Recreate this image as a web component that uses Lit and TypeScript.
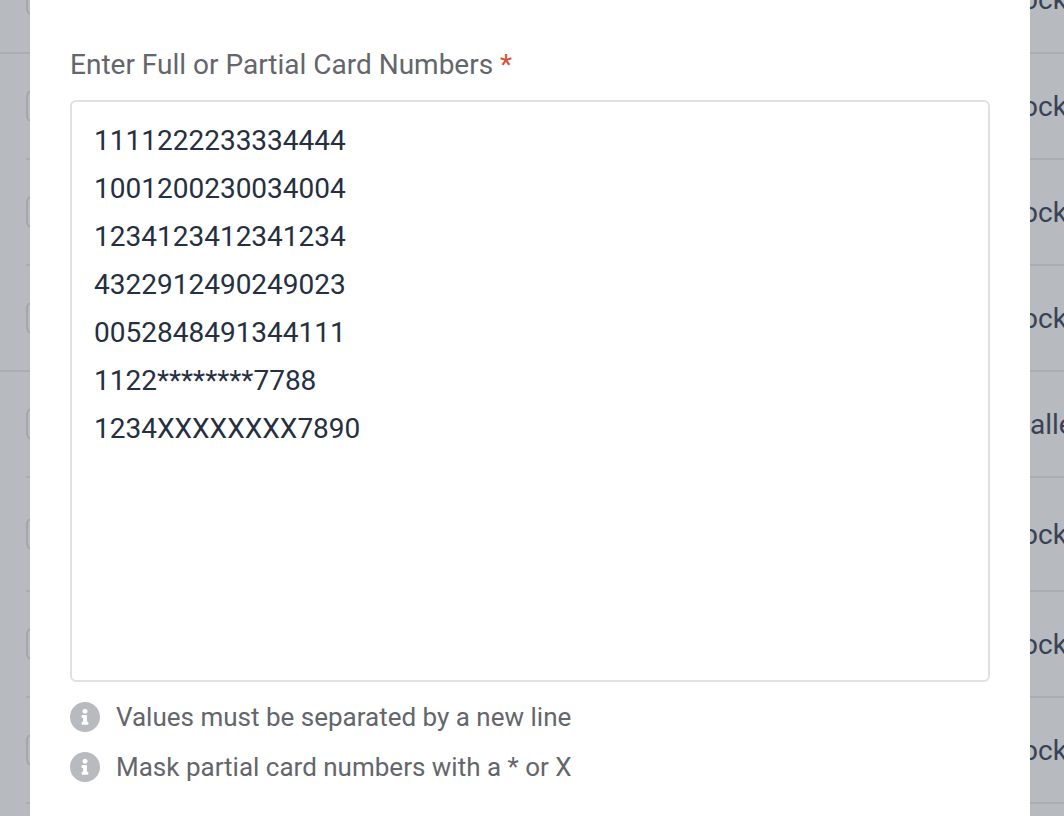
import { LitElement, html, css } from "lit";
import { customElement, property, state } from "lit/decorators.js";
import { classMap } from "lit/directives/class-map.js";

interface Row {
  text: string;
  endsGroup?: boolean;
  tall?: boolean;
  inset?: boolean;
}

const ROWS: Row[] = [
  { text: "ock", endsGroup: true },
  { text: "ock" },
  { text: "ock" },
  { text: "ock", endsGroup: true },
  { text: "alle", inset: true },
  { text: "ock", tall: true },
  { text: "ock" },
  { text: "ock" },
  { text: "" },
];

@customElement("info-hint")
export class InfoHint extends LitElement {
  static styles = css`
    :host {
      display: flex;
      align-items: center;
      gap: 16px;
      color: #63666b;
      font-size: 26px;
      line-height: 30px;
    }
    .icon {
      flex: none;
      width: 30px;
      height: 30px;
      fill: #b7babf;
    }
  `;

  render() {
    return html`
      <svg class="icon" viewBox="8 8 496 496" aria-hidden="true">
        <path
          d="M256 8C119.043 8 8 119.083 8 256c0 136.997 111.043 248 248 248s248-111.003 248-248C504 119.083 392.957 8 256 8zm0 110c23.196 0 42 18.804 42 42s-18.804 42-42 42-42-18.804-42-42 18.804-42 42-42zm56 254c0 6.627-5.373 12-12 12h-88c-6.627 0-12-5.373-12-12v-24c0-6.627 5.373-12 12-12h12v-64h-12c-6.627 0-12-5.373-12-12v-24c0-6.627 5.373-12 12-12h64c6.627 0 12 5.373 12 12v100h12c6.627 0 12 5.373 12 12v24z"
        />
      </svg>
      <span><slot></slot></span>
    `;
  }
}

@customElement("records-table")
export class RecordsTable extends LitElement {
  @property({ attribute: false }) rows: Row[] = [];

  static styles = css`
    :host {
      display: block;
      color: #374354;
      font-size: 28px;
      line-height: 32px;
    }
    .table {
      width: 100%;
      margin-top: -54px;
      border-collapse: separate;
      border-spacing: 0;
      table-layout: fixed;
    }
    .cell {
      box-sizing: border-box;
      height: 106px;
      padding: 0;
      border-bottom: 2px solid #aaadb3;
      vertical-align: middle;
      white-space: nowrap;
    }
    .first .cell {
      height: 108px;
    }
    .tall .cell {
      height: 114px;
    }
    .gutter {
      width: 26px;
      border-bottom-color: transparent;
    }
    .group-end .gutter {
      border-bottom-color: #aaadb3;
    }
    .kind {
      width: 42px;
      padding-top: 2px;
    }
    .inset .kind {
      padding-left: 8px;
    }
    .box {
      display: block;
      appearance: none;
      box-sizing: border-box;
      width: 32px;
      height: 32px;
      margin: 0;
      border: 2px solid #a3a6ad;
      border-radius: 6px;
    }
  `;

  render() {
    return html`
      <table class="table">
        <tbody>
          ${this.rows.map(
            (row, i) => html`
              <tr
                class=${classMap({
                  first: i === 0,
                  tall: !!row.tall,
                  inset: !!row.inset,
                  "group-end": !!row.endsGroup,
                })}
              >
                <td class="cell gutter"></td>
                <td class="cell">
                  <input class="box" type="checkbox" tabindex="-1" aria-label="Select row" />
                </td>
                <td class="cell kind">${row.text}</td>
              </tr>
            `
          )}
        </tbody>
      </table>
    `;
  }
}

@customElement("app-root")
export class AppRoot extends LitElement {
  @state() private numbers = [
    "1111222233334444",
    "1001200230034004",
    "1234123412341234",
    "4322912490249023",
    "0052848491344111",
    "1122********7788",
    "1234XXXXXXXX7890",
  ].join("\n");

  static styles = css`
    :host {
      display: flex;
      position: relative;
      box-sizing: border-box;
      min-height: 100vh;
      padding: 0 34px 0 30px;
      overflow: hidden;
      background: #b7babf;
      font-family: Roboto, "Liberation Sans", sans-serif;
    }
    .backdrop {
      position: absolute;
      inset: 0;
      overflow: hidden;
    }
    .dialog {
      position: relative;
      flex: 1;
      min-width: 0;
      box-sizing: border-box;
      padding: 49px 40px 32px;
      background: #fff;
    }
    .label {
      display: block;
      margin-bottom: 19px;
      color: #63666b;
      font-size: 28px;
      line-height: 32px;
    }
    .required {
      color: #dc4f35;
    }
    .numbers {
      display: block;
      box-sizing: border-box;
      width: 100%;
      height: 582px;
      margin: 0;
      padding: 15px 22px;
      border: 2px solid #dee1e6;
      border-radius: 6px;
      outline: none;
      resize: none;
      background: #fff;
      color: #252f3f;
      font-family: inherit;
      font-size: 28px;
      line-height: 48px;
    }
    .hints {
      display: flex;
      flex-direction: column;
      gap: 20px;
      margin-top: 20px;
    }
  `;

  private onInput(e: Event) {
    this.numbers = (e.target as HTMLTextAreaElement).value;
  }

  render() {
    return html`
      <records-table class="backdrop" .rows=${ROWS}></records-table>
      <section class="dialog" role="dialog" aria-labelledby="numbers-label">
        <label class="label" id="numbers-label" for="numbers"
          >Enter Full or Partial Card Numbers <span class="required">*</span></label
        >
        <textarea
          class="numbers"
          id="numbers"
          required
          spellcheck="false"
          .value=${this.numbers}
          @input=${this.onInput}
        ></textarea>
        <div class="hints">
          <info-hint>Values must be separated by a new line</info-hint>
          <info-hint>Mask partial card numbers with a * or X</info-hint>
        </div>
      </section>
    `;
  }
}
